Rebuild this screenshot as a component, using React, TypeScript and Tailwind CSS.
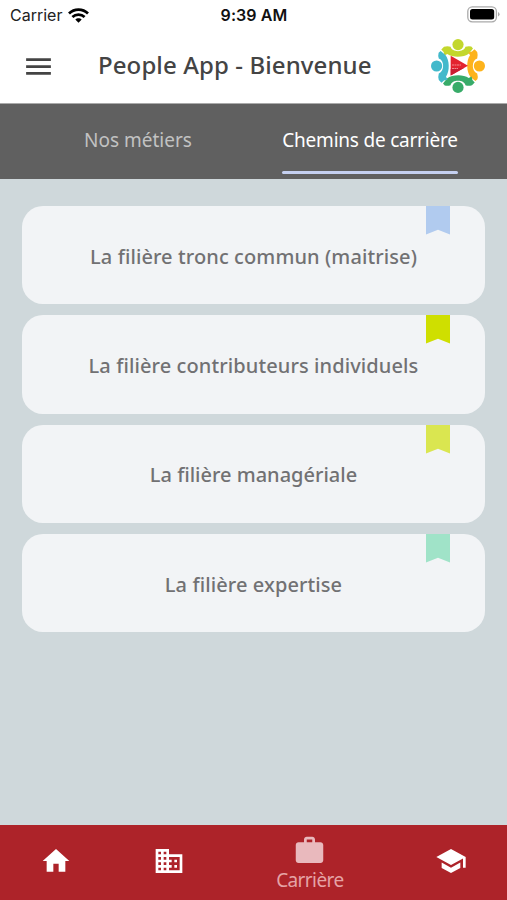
import { MdBusiness, MdHome, MdMenu, MdWork } from 'react-icons/md'

const paths = [
  { title: 'La filière tronc commun (maitrise)', color: 'text-[#b1cbef]', spacing: 'tracking-[0.1px]' },
  { title: 'La filière contributeurs individuels', color: 'text-[#cfdf00]', spacing: 'tracking-[0.1px]' },
  { title: 'La filière managériale', color: 'text-[#dae650]', spacing: 'tracking-[0px]' },
  { title: 'La filière expertise', color: 'text-[#a0e3c8]', spacing: 'tracking-[0.1px]' },
]

const people = [
  { color: '#c3d72d', angle: 0 },
  { color: '#fdb31c', angle: 90 },
  { color: '#38ab69', angle: 180 },
  { color: '#42b9cb', angle: 270 },
]

function StatusBar() {
  return (
    <div className="relative flex h-[30px] items-center justify-between pl-[10px] pr-[7px] font-['Inter','Liberation_Sans',sans-serif] text-[16px] leading-[30px] text-[#222]">
      <div className="flex items-center gap-[6px]">
        <span>Carrier</span>
        <svg width="21" height="15" viewBox="0 0 21 15" fill="none" stroke="#000" strokeWidth="2.7">
          <path d="M1 5.5C6.2 0.3 14.8 0.3 20 5.5" />
          <path d="M4.4 9C7.8 5.7 13.2 5.7 16.6 9" />
          <path d="M7.3 11.5C9 9.8 12 9.8 13.7 11.5L10.5 14.7Z" fill="#000" stroke="none" />
        </svg>
      </div>
      <span className="absolute left-1/2 -translate-x-1/2 whitespace-nowrap pl-px font-semibold tracking-[0.1px] text-[#111]">9:39 AM</span>
      <svg className="-mt-[2px]" width="33" height="17" viewBox="0 0 33 17" fill="none">
        <rect x="0.8" y="0.8" width="28.6" height="15" rx="4.5" stroke="#aaa" strokeWidth="1.3" />
        <rect x="3" y="3" width="24.2" height="10.6" rx="2.5" fill="#000" />
        <path d="M31 6v4.6q1.6-.8 1.6-2.3T31 6Z" fill="#aaa" />
      </svg>
    </div>
  )
}

function Logo() {
  return (
    <svg width="56" height="56" viewBox="0 0 56 56">
      {people.map(person => (
        <g key={person.angle} fill={person.color} transform={`rotate(${person.angle} 28 28)`}>
          <path d="M11.3 11.5L14 8.8Q17.5 7.8 20.6 8.8C22 14.6 34 14.6 35.4 8.8Q38.5 7.8 41.3 8.6L43 10.6L39 15.5C34 19.5 23 20 17.3 16L14.4 17.6L13.6 14Z" />
          <circle cx="28" cy="6.6" r="5.6" />
        </g>
      ))}
      <path d="M20.7 17.8V37.6L38 27.7Z" fill="#e3242f" />
      <path d="M20.7 31V37.6L34 30Z" fill="#c91c30" />
      <path d="M22 27h9M22 30.5h6" stroke="#f5a6a8" strokeWidth="0.8" strokeDasharray="2 .5" />
    </svg>
  )
}

function Bookmark({ color }: { color: string }) {
  return (
    <svg className={`absolute right-[35px] top-0 ${color}`} width="24" height="29" viewBox="0 0 24 29">
      <path d="M0 0H24V28.5L12 23.8L0 28.5Z" fill="currentColor" />
    </svg>
  )
}

export default function App() {
  return (
    <div className="flex h-[900px] w-[507px] flex-col overflow-hidden bg-[#cfd8db] font-['Noto_Sans','Open_Sans',sans-serif]">
      <header className="h-[104px] shrink-0 border-b border-[#aaa] bg-white">
        <StatusBar />
        <div className="flex h-[72px] items-center pl-[22px] pr-[21px]">
          <MdMenu className="size-[33px] shrink-0 text-[#444]" />
          <h1 className="-mt-[2px] ml-[43px] whitespace-nowrap text-[24px] font-medium leading-none tracking-[0.1px] text-[#444]">People App - Bienvenue</h1>
          <div className="ml-auto">
            <Logo />
          </div>
        </div>
      </header>

      {/* Tabs */}
      <nav className="flex h-[75px] shrink-0 bg-[#606060] pl-[50px] text-[19px] leading-[73px]">
        <div className="flex w-[176px] justify-center whitespace-nowrap text-[#c2c2c2]">Nos métiers</div>
        <div className="ml-[56px] flex w-[176px] flex-col items-center text-white">
          <span className="h-[67px] whitespace-nowrap tracking-[-0.22px]">Chemins de carrière</span>
          <span className="h-[3px] w-full rounded-sm bg-[#c5d0f0]" />
        </div>
      </nav>

      <main className="flex flex-1 flex-col gap-[11px] px-[22px] pt-[27px]">
        {paths.map(path => (
          <div key={path.title} className="relative flex h-[98.3px] items-center justify-center rounded-[21px] bg-[#f2f4f6]">
            <Bookmark color={path.color} />
            <span className={`mt-[3px] whitespace-nowrap text-[20px] font-medium text-[#717173] ${path.spacing}`}>{path.title}</span>
          </div>
        ))}
      </main>

      {/* Bottom navigation, the active tab is wider */}
      <nav className="flex h-[75px] shrink-0 bg-[#ad2329] text-white">
        <div className="flex flex-1 justify-center pt-[20px]">
          <MdHome className="size-[32px]" />
        </div>
        <div className="flex flex-1 justify-center pt-[20px]">
          <MdBusiness className="size-[32px]" />
        </div>
        <div className="flex flex-[1.5] flex-col items-center pt-[9px] text-[#e9b9bd]">
          <MdWork className="size-[33px]" />
          <span className="text-[19px] leading-[26px] tracking-[-0.6px] text-[#e5a3a6]">Carrière</span>
        </div>
        <div className="flex flex-1 justify-center pt-[20px]">
          <svg className="size-[32px]" viewBox="0 0 24 24" fill="currentColor">
            <path d="M12 3L1 9l11 6 9-4.91V17h2V9L12 3ZM5 13.18v4L12 21l7-3.82v-4L12 17l-7-3.82Z" />
          </svg>
        </div>
      </nav>
    </div>
  )
}
